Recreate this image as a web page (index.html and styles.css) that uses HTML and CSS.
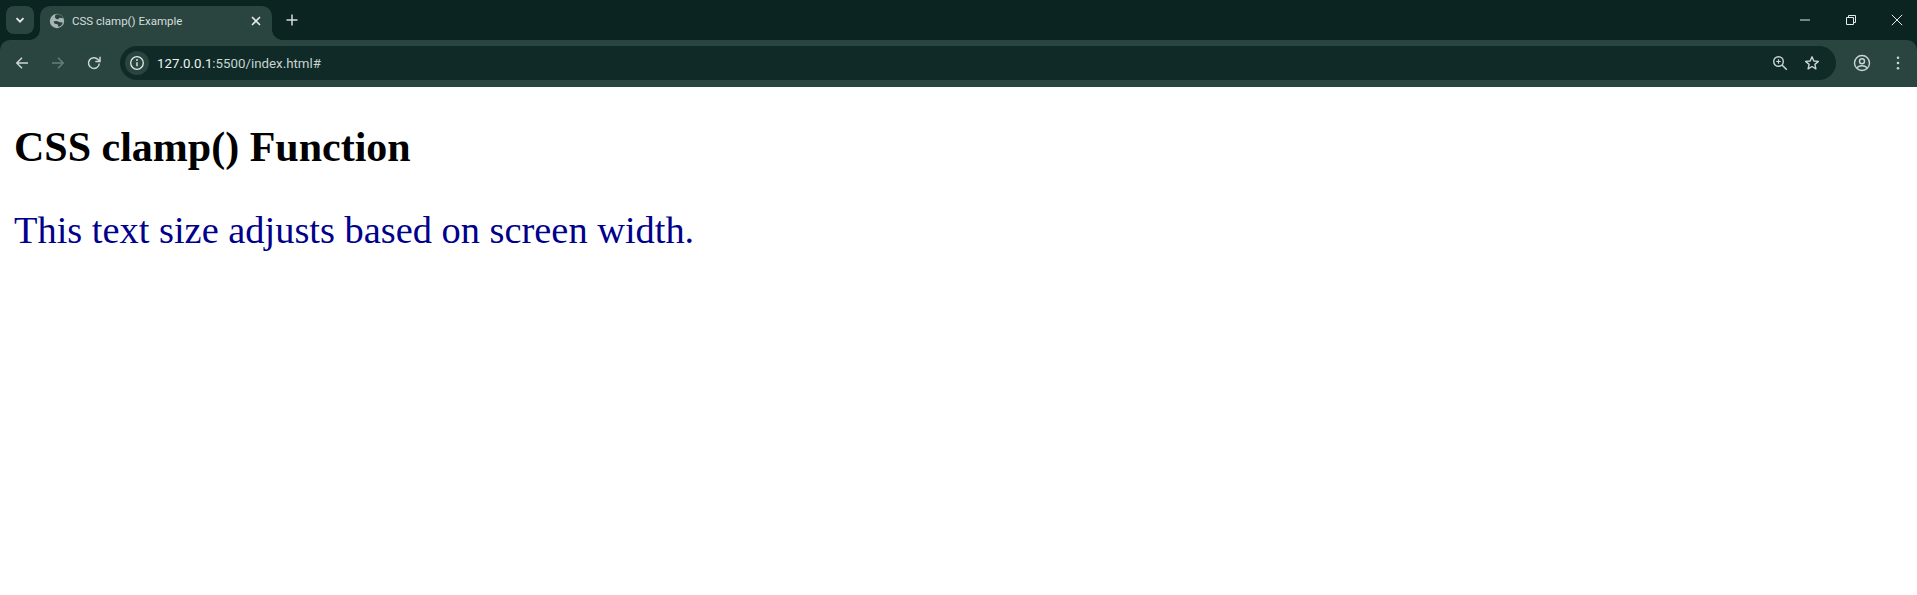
FILE: index.html
```html
<!DOCTYPE html>
<html lang="en">
<head>
<meta charset="utf-8">
<title>CSS clamp() Example</title>
<link rel="stylesheet" href="styles.css">
</head>
<body>
<header class="chrome">
  <div class="tabstrip">
    <button class="tabsearch" aria-label="Search tabs">
      <svg width="16" height="16" viewBox="0 0 16 16"><path d="M4.500 6.200 8 9.700l3.500-3.500" fill="none" stroke="#e3ebe9" stroke-width="1.800"/></svg>
    </button>
    <div class="tab">
      <svg class="favicon" width="16" height="16" viewBox="0 0 16 16"><circle cx="8" cy="8" r="7.200" fill="#a9b5b2"/><path d="M6.500 1.500 10 1.300l3.200 2L14 5.200l-3.200-.4-1.700 1.400-1.900-.3L5.800 4.200zM4.500 8.300l3.300-.3 3.300 1.300 2.700.2-1.300 2.700-2.800 1.800-1.200-2.700-2.800-.6z" fill="#2a4440"/></svg>
      <span class="tabtitle">CSS clamp() Example</span>
      <svg class="tabclose" width="16" height="16" viewBox="0 0 16 16"><path d="M4 4l8 8M12 4l-8 8" stroke="#e3ebe9" stroke-width="1.600"/></svg>
    </div>
    <svg class="newtab" width="16" height="16" viewBox="0 0 16 16"><path d="M8 2.500v11M2.500 8h11" stroke="#d5dfdc" stroke-width="1.500"/></svg>
    <div class="winctl">
      <svg width="12" height="12" viewBox="0 0 12 12"><path d="M1 6h10" stroke="#e3ebe9" stroke-width="1"/></svg>
      <svg width="12" height="12" viewBox="0 0 12 12"><path d="M1.500 3.500h7v7h-7zM3.500 3.500V1.500h7v7H8.500" fill="none" stroke="#e3ebe9" stroke-width="1"/></svg>
      <svg width="12" height="12" viewBox="0 0 12 12"><path d="M.8.800l10.400 10.400M11.200.800.800 11.200" stroke="#e3ebe9" stroke-width="1"/></svg>
    </div>
  </div>
  <div class="toolbar">
    <svg class="navicon" width="16" height="16" viewBox="0 0 16 16"><path d="M14 8H3M8 2.800 2.800 8 8 13.200" fill="none" stroke="#c9d5d2" stroke-width="1.500"/></svg>
    <svg class="navicon" width="16" height="16" viewBox="0 0 16 16"><path d="M2 8h11M8 2.800 13.200 8 8 13.200" fill="none" stroke="#687d79" stroke-width="1.500"/></svg>
    <svg class="navicon" width="16" height="16" viewBox="0 0 16 16"><path d="M13.300 8.500a5.400 5.400 0 1 1-1.300-4L14 6.500M14 1.800v4.700H9.300" fill="none" stroke="#c9d5d2" stroke-width="1.500"/></svg>
    <div class="omnibox">
      <div class="infochip">
        <svg width="16" height="16" viewBox="0 0 16 16"><circle cx="8" cy="8" r="6.300" fill="none" stroke="#e3ebe9" stroke-width="1.300"/><path d="M8 7.200v4" stroke="#e3ebe9" stroke-width="1.400"/><circle cx="8" cy="5" r=".9" fill="#e3ebe9"/></svg>
      </div>
      <span class="url"><span class="host">127.0.0.1</span>:5500/index.html#</span>
      <svg class="omniicon zoomicon" width="16" height="16" viewBox="0 0 16 16"><circle cx="6.500" cy="6.500" r="4.800" fill="none" stroke="#c9d5d2" stroke-width="1.400"/><path d="M10 10l4.800 4.800" stroke="#c9d5d2" stroke-width="1.500"/><path d="M6.500 4.200v4.600M4.200 6.500h4.600" stroke="#c9d5d2" stroke-width="1.200"/></svg>
      <svg class="omniicon staricon" width="16" height="16" viewBox="0 0 16 16"><path d="M8 1.800l1.800 4.200 4.600.4-3.500 3 1 4.500L8 11.500l-3.900 2.400 1-4.500-3.500-3 4.600-.4z" fill="none" stroke="#c9d5d2" stroke-width="1.400" stroke-linejoin="round"/></svg>
    </div>
    <svg class="profile" width="18" height="18" viewBox="0 0 18 18"><circle cx="9" cy="9" r="7.500" fill="none" stroke="#c9d5d2" stroke-width="1.400"/><circle cx="9" cy="7.200" r="2.500" fill="none" stroke="#c9d5d2" stroke-width="1.400"/><path d="M3.800 13.800c1.500-1.500 3.200-2.100 5.200-2.100s3.700.6 5.200 2.100" fill="none" stroke="#c9d5d2" stroke-width="1.400"/></svg>
    <svg class="menu" width="16" height="16" viewBox="0 0 16 16"><circle cx="8" cy="2.800" r="1.300" fill="#c9d5d2"/><circle cx="8" cy="8" r="1.300" fill="#c9d5d2"/><circle cx="8" cy="13.200" r="1.300" fill="#c9d5d2"/></svg>
  </div>
</header>
<main class="page">
  <h1 class="title">CSS clamp() Function</h1>
  <p class="lead">This text size adjusts based on screen width.</p>
</main>
</body>
</html>
```
FILE: styles.css
```css
* { box-sizing: border-box; }
html, body { margin: 0; padding: 0; height: 100%; background: #fff; overflow: hidden; }
body { display: flex; flex-direction: column; font-family: "Liberation Serif", serif; }
.chrome { flex: none; height: 87px; display: flex; flex-direction: column; background: #0b2321; font-family: Roboto, "Open Sans", sans-serif; }
.tabstrip { height: 40px; display: flex; align-items: flex-start; padding: 6px 0 0 6px; }
.tabsearch { width: 28px; height: 28px; border: 0; padding: 0; border-radius: 8px; background: #2a4440; display: flex; align-items: center; justify-content: center; }
.tab { position: relative; width: 232px; height: 34px; margin-left: 6px; padding: 0 8px 4px 9px; border-radius: 10px 10px 0 0; background: #2a4440; display: flex; align-items: center; }
.tab::before, .tab::after { content: ""; position: absolute; bottom: 0; width: 10px; height: 10px; }
.tab::before { left: -10px; background: radial-gradient(circle at 0 0, transparent 9.500px, #2a4440 10px); }
.tab::after { right: -10px; background: radial-gradient(circle at 100% 0, transparent 9.500px, #2a4440 10px); }
.favicon { flex: none; }
.tabtitle { margin-left: 7px; flex: 1; color: #d5dfdc; font-size: 11.500px; white-space: nowrap; }
.tabclose { flex: none; }
.newtab { margin: 6px 0 0 12px; flex: none; }
.winctl { margin-left: auto; display: flex; gap: 34px; padding: 8px 14px 0 0; align-items: center; }
.toolbar { height: 47px; background: #2a4440; display: flex; align-items: center; padding: 0 0 1px 14px; border-radius: 10px 10px 0 0; }
.navicon { flex: none; margin-right: 20px; }
.omnibox { flex: none; width: 1716px; height: 34px; margin-left: -2px; background: #0f2a27; border-radius: 17px; display: flex; align-items: center; padding: 0 16px 0 5px; }
.infochip { width: 24px; height: 24px; border-radius: 50%; background: #2a4440; display: flex; align-items: center; justify-content: center; }
.url { margin-left: 8px; flex: 1; font-size: 13.300px; color: #c8d4d1; white-space: nowrap; }
.host { color: #eef3f2; }
.omniicon { flex: none; }
.staricon { margin-left: 16px; }
.profile { flex: none; margin-left: 17px; }
.menu { flex: none; margin-left: 19px; }
.page { flex: 1; padding: 36px 14px 0; }
.title { margin: 0; font-size: 42px; line-height: 48px; font-weight: 700; color: #000; }
.lead { margin: 36px 0 0; font-size: 38.400px; line-height: 46px; color: #00008b; }
```
